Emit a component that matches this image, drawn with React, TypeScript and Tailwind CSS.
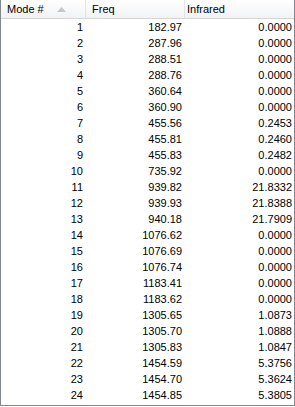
import React from "react";

const rows: [number, string, string][] = [
  [1, "182.97", "0.0000"],
  [2, "287.96", "0.0000"],
  [3, "288.51", "0.0000"],
  [4, "288.76", "0.0000"],
  [5, "360.64", "0.0000"],
  [6, "360.90", "0.0000"],
  [7, "455.56", "0.2453"],
  [8, "455.81", "0.2460"],
  [9, "455.83", "0.2482"],
  [10, "735.92", "0.0000"],
  [11, "939.82", "21.8332"],
  [12, "939.93", "21.8388"],
  [13, "940.18", "21.7909"],
  [14, "1076.62", "0.0000"],
  [15, "1076.69", "0.0000"],
  [16, "1076.74", "0.0000"],
  [17, "1183.41", "0.0000"],
  [18, "1183.62", "0.0000"],
  [19, "1305.65", "1.0873"],
  [20, "1305.70", "1.0888"],
  [21, "1305.83", "1.0847"],
  [22, "1454.59", "5.3756"],
  [23, "1454.70", "5.3624"],
  [24, "1454.85", "5.3805"],
];

const cols = "grid grid-cols-[85px_99px_110px]";

export default function App() {
  return (
    <div
      className="w-[295px] h-[407px] bg-white text-black text-[11px] leading-none"
      style={{ fontFamily: '"Liberation Sans", Arial, sans-serif' }}
    >
      <div className="w-[295px] h-[406px] border-l border-b border-r border-[#828790] overflow-hidden">
        <div className={`${cols} h-[19px] bg-gradient-to-b from-white to-[#f1f2f4] border-b border-[#d5d5d5]`}>
          <div className="flex items-center pl-[6px] border-r border-[#e3e4e6] relative">
            <span>Mode #</span>
            <svg className="absolute left-[56px] top-[7px]" width="9" height="5" viewBox="0 0 9 5">
              <polygon points="0,5 4.5,0 9,5" fill="#c4c7cc" />
            </svg>
          </div>
          <div className="flex items-center pl-[6px] border-r border-[#e3e4e6]">Freq</div>
          <div className="flex items-center pl-[2px]">Infrared</div>
        </div>
        {rows.map(([m, f, ir]) => (
          <div key={m} className={`${cols} h-[16px] items-center`}>
            <div className="text-right pr-[3px]">{m}</div>
            <div className="text-right pr-[3px]">{f}</div>
            <div className="text-right pr-[3px]">{ir}</div>
          </div>
        ))}
      </div>
    </div>
  );
}
